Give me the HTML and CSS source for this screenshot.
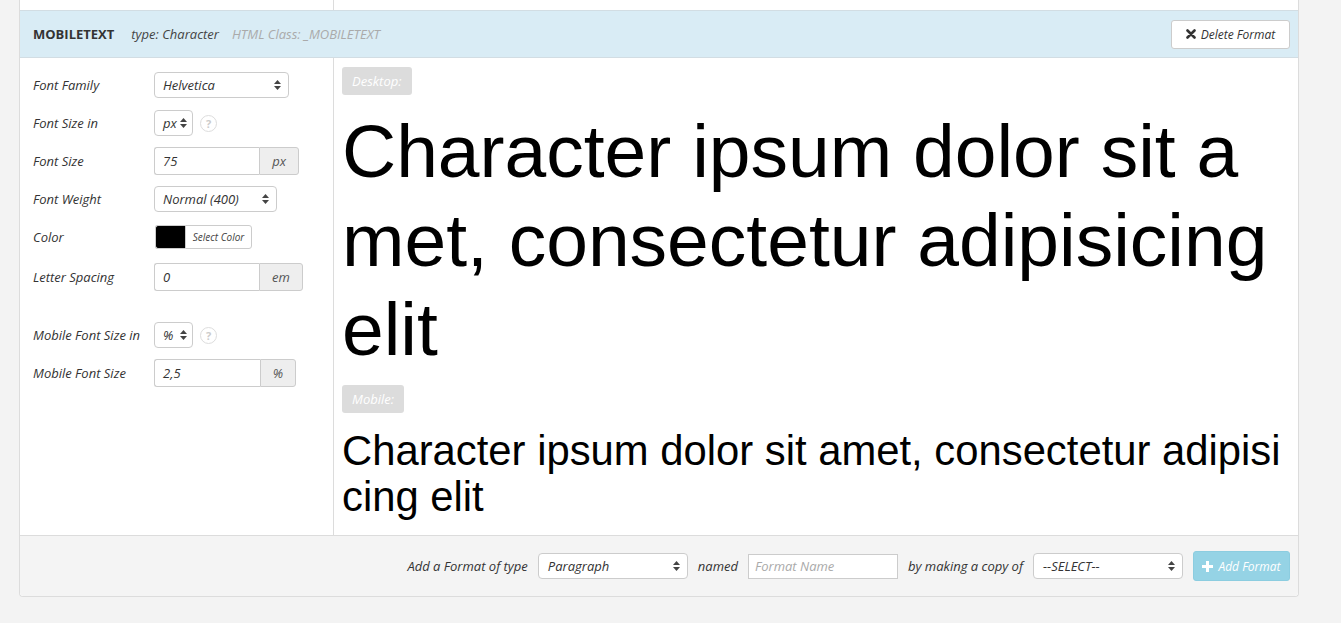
FILE: index.html
```html
<!DOCTYPE html>
<html>
<head>
<meta charset="utf-8">
<link rel="stylesheet" href="styles.css">
</head>
<body>
<div class="panel">
  <div class="prev-body">
    <div class="prev-left"></div>
    <div class="prev-right"></div>
  </div>
  <div class="header">
    <span class="fmt-name">MOBILETEXT</span>
    <span class="fmt-type">type: Character</span>
    <span class="fmt-class">HTML Class: _MOBILETEXT</span>
    <button class="btn btn-delete"><svg class="ico-x" width="10" height="10" viewBox="0 0 10 10"><path d="M1.5 1.5 L8.5 8.5 M8.5 1.5 L1.5 8.5" stroke="#333" stroke-width="2.6" stroke-linecap="round"/></svg>Delete Format</button>
  </div>
  <div class="body">
    <div class="settings">
      <div class="row">
        <span class="label">Font Family</span>
        <div class="select w-family"><span>Helvetica</span><svg class="arrows" width="7" height="10" viewBox="0 0 7 10"><path d="M3.5 0 L7 4 L0 4 Z M3.5 10 L7 6 L0 6 Z" fill="#444"/></svg></div>
      </div>
      <div class="row">
        <span class="label">Font Size in</span>
        <div class="select w-unit"><span>px</span><svg class="arrows" width="7" height="10" viewBox="0 0 7 10"><path d="M3.5 0 L7 4 L0 4 Z M3.5 10 L7 6 L0 6 Z" fill="#444"/></svg></div>
        <span class="help">?</span>
      </div>
      <div class="row">
        <span class="label">Font Size</span>
        <div class="group">
          <span class="input w-input">75</span><span class="addon w-px">px</span>
        </div>
      </div>
      <div class="row">
        <span class="label">Font Weight</span>
        <div class="select w-weight"><span>Normal (400)</span><svg class="arrows" width="7" height="10" viewBox="0 0 7 10"><path d="M3.5 0 L7 4 L0 4 Z M3.5 10 L7 6 L0 6 Z" fill="#444"/></svg></div>
      </div>
      <div class="row">
        <span class="label">Color</span>
        <div class="color">
          <span class="swatch"></span><span class="color-btn">Select Color</span>
        </div>
      </div>
      <div class="row row-tall">
        <span class="label">Letter Spacing</span>
        <div class="group">
          <span class="input w-input">0</span><span class="addon w-em">em</span>
        </div>
      </div>
      <div class="spacer"></div>
      <div class="row">
        <span class="label">Mobile Font Size in</span>
        <div class="select w-unit"><span>%</span><svg class="arrows" width="7" height="10" viewBox="0 0 7 10"><path d="M3.5 0 L7 4 L0 4 Z M3.5 10 L7 6 L0 6 Z" fill="#444"/></svg></div>
        <span class="help">?</span>
      </div>
      <div class="row">
        <span class="label">Mobile Font Size</span>
        <div class="group">
          <span class="input w-input2">2,5</span><span class="addon w-pct">%</span>
        </div>
      </div>
    </div>
    <div class="preview">
      <span class="badge">Desktop:</span>
      <div class="sample sample-desktop">Character ipsum dolor sit amet, consectetur adipisicing elit</div>
      <span class="badge">Mobile:</span>
      <div class="sample sample-mobile">Character ipsum dolor sit amet, consectetur adipisicing elit</div>
    </div>
  </div>
  <div class="footer">
    <span class="ftext">Add a Format of type</span>
    <div class="select w-foot"><span>Paragraph</span><svg class="arrows" width="7" height="10" viewBox="0 0 7 10"><path d="M3.5 0 L7 4 L0 4 Z M3.5 10 L7 6 L0 6 Z" fill="#444"/></svg></div>
    <span class="ftext">named</span>
    <span class="text-input">Format Name</span>
    <span class="ftext">by making a copy of</span>
    <div class="select w-foot"><span>--SELECT--</span><svg class="arrows" width="7" height="10" viewBox="0 0 7 10"><path d="M3.5 0 L7 4 L0 4 Z M3.5 10 L7 6 L0 6 Z" fill="#444"/></svg></div>
    <button class="btn btn-add"><svg width="11" height="11" viewBox="0 0 11 11"><path d="M4 0 H7 V4 H11 V7 H7 V11 H4 V7 H0 V4 H4 Z" fill="#fff"/></svg>Add Format</button>
  </div>
</div>
</body>
</html>
```

FILE: styles.css
```css
* { box-sizing: border-box; }

body {
  margin: 0;
  background: #f3f3f3;
  font-family: "Open Sans", "Liberation Sans", sans-serif;
  font-size: 13px;
  color: #333;
}

.panel {
  margin-left: 19px;
  width: 1280px;
  background: #fff;
  border-left: 1px solid #dcdcdc;
  border-right: 1px solid #dcdcdc;
  border-bottom: 1px solid #dcdcdc;
  border-radius: 0 0 4px 4px;
}

.prev-body {
  display: flex;
  height: 10px;
}
.prev-left {
  width: 314px;
  border-right: 1px solid #dcdcdc;
}

.header {
  display: flex;
  align-items: center;
  height: 48px;
  background: #d9ecf5;
  border-top: 1px solid #d2dde3;
  border-bottom: 1px solid #d2dde3;
  padding: 0 8px 0 13px;
}
.fmt-name {
  font-weight: 700;
  color: #333;
  margin-right: 17px;
}
.fmt-type {
  font-style: italic;
  color: #444;
  margin-right: 13px;
}
.fmt-class {
  font-style: italic;
  color: #aaa;
}

.btn {
  font-family: "Open Sans", "Liberation Sans", sans-serif;
  font-style: italic;
  font-size: 12px;
  display: flex;
  align-items: center;
  justify-content: center;
  gap: 5px;
  border-radius: 3px;
  cursor: pointer;
}
.btn-delete {
  margin-left: auto;
  width: 119px;
  height: 29px;
  background: #fff;
  border: 1px solid #ccc;
  color: #333;
  padding: 0;
}

.body {
  display: flex;
  height: 477px;
}

.settings {
  width: 314px;
  border-right: 1px solid #dcdcdc;
  padding: 8px 0 0 13px;
}
.row {
  display: flex;
  align-items: center;
  height: 38px;
}
.row-tall { height: 42px; }
.spacer { height: 18px; }

.label {
  width: 121px;
  font-style: italic;
  color: #333;
  white-space: nowrap;
}

.select {
  display: flex;
  align-items: center;
  justify-content: space-between;
  height: 26px;
  background: #fff;
  border: 1px solid #ccc;
  border-radius: 4px;
  padding: 0 7px 0 8px;
  font-style: italic;
  color: #333;
}
.arrows { flex: none; }
.w-family { width: 135px; }
.w-unit { width: 39px; padding-left: 8px; padding-right: 5px; }
.w-weight { width: 123px; }
.w-foot { width: 150px; padding-left: 9px; }

.help {
  margin-left: 7px;
  width: 17px;
  height: 17px;
  border: 1.5px solid #ddd;
  border-radius: 50%;
  display: flex;
  align-items: center;
  justify-content: center;
  color: #ccc;
  font-size: 11px;
  font-weight: 700;
}

.group {
  display: flex;
  height: 28px;
}
.input {
  height: 28px;
  border: 1px solid #ccc;
  border-right: none;
  border-radius: 3px 0 0 3px;
  padding-left: 8px;
  display: flex;
  align-items: center;
  font-style: italic;
  color: #333;
}
.w-input { width: 105px; }
.w-input2 { width: 106px; }
.addon {
  height: 28px;
  border: 1px solid #ccc;
  border-radius: 0 3px 3px 0;
  background: #eee;
  display: flex;
  align-items: center;
  justify-content: center;
  font-style: italic;
  color: #555;
}
.w-px { width: 40px; }
.w-em { width: 44px; }
.w-pct { width: 36px; }

.color {
  display: flex;
  height: 24px;
  margin-left: 1px;
}
.swatch {
  width: 30px;
  background: #000;
  border: 1px solid #ccc;
  border-right: none;
  border-radius: 3px 0 0 3px;
}
.color-btn {
  width: 67px;
  border: 1px solid #ccc;
  border-radius: 0 3px 3px 0;
  background: #fff;
  font-size: 10px;
  font-style: italic;
  color: #444;
  display: flex;
  align-items: center;
  justify-content: center;
}

.preview {
  flex: 1;
  padding: 9px 8px 0 8px;
}
.badge {
  display: inline-block;
  height: 28px;
  line-height: 28px;
  padding: 0 10px;
  background: #dcdcdc;
  color: #fff;
  font-style: italic;
  border-radius: 3px;
}
.sample {
  font-family: "Liberation Sans", Arial, sans-serif;
  color: #000;
  word-break: break-all;
}
.sample-desktop {
  font-size: 75px;
  line-height: 89px;
  margin: 12px 0 11px 0;
}
.sample-mobile {
  font-size: 41.8px;
  line-height: 46px;
  margin-top: 15px;
}

.footer {
  display: flex;
  align-items: center;
  justify-content: flex-end;
  gap: 10px;
  height: 61px;
  background: #f4f4f4;
  border-top: 1px solid #dcdcdc;
  border-radius: 0 0 4px 4px;
  padding: 0 8px 0 0;
}
.ftext {
  font-style: italic;
  color: #333;
}
.text-input {
  width: 150px;
  height: 25px;
  background: #fff;
  border: 1px solid #ccc;
  display: flex;
  align-items: center;
  padding-left: 6px;
  font-style: italic;
  color: #aaa;
}
.btn-add {
  width: 97px;
  height: 30px;
  background: #95d3e5;
  border: 1px solid #8ccde0;
  color: #fff;
  font-size: 12px;
  padding: 0;
}
```
